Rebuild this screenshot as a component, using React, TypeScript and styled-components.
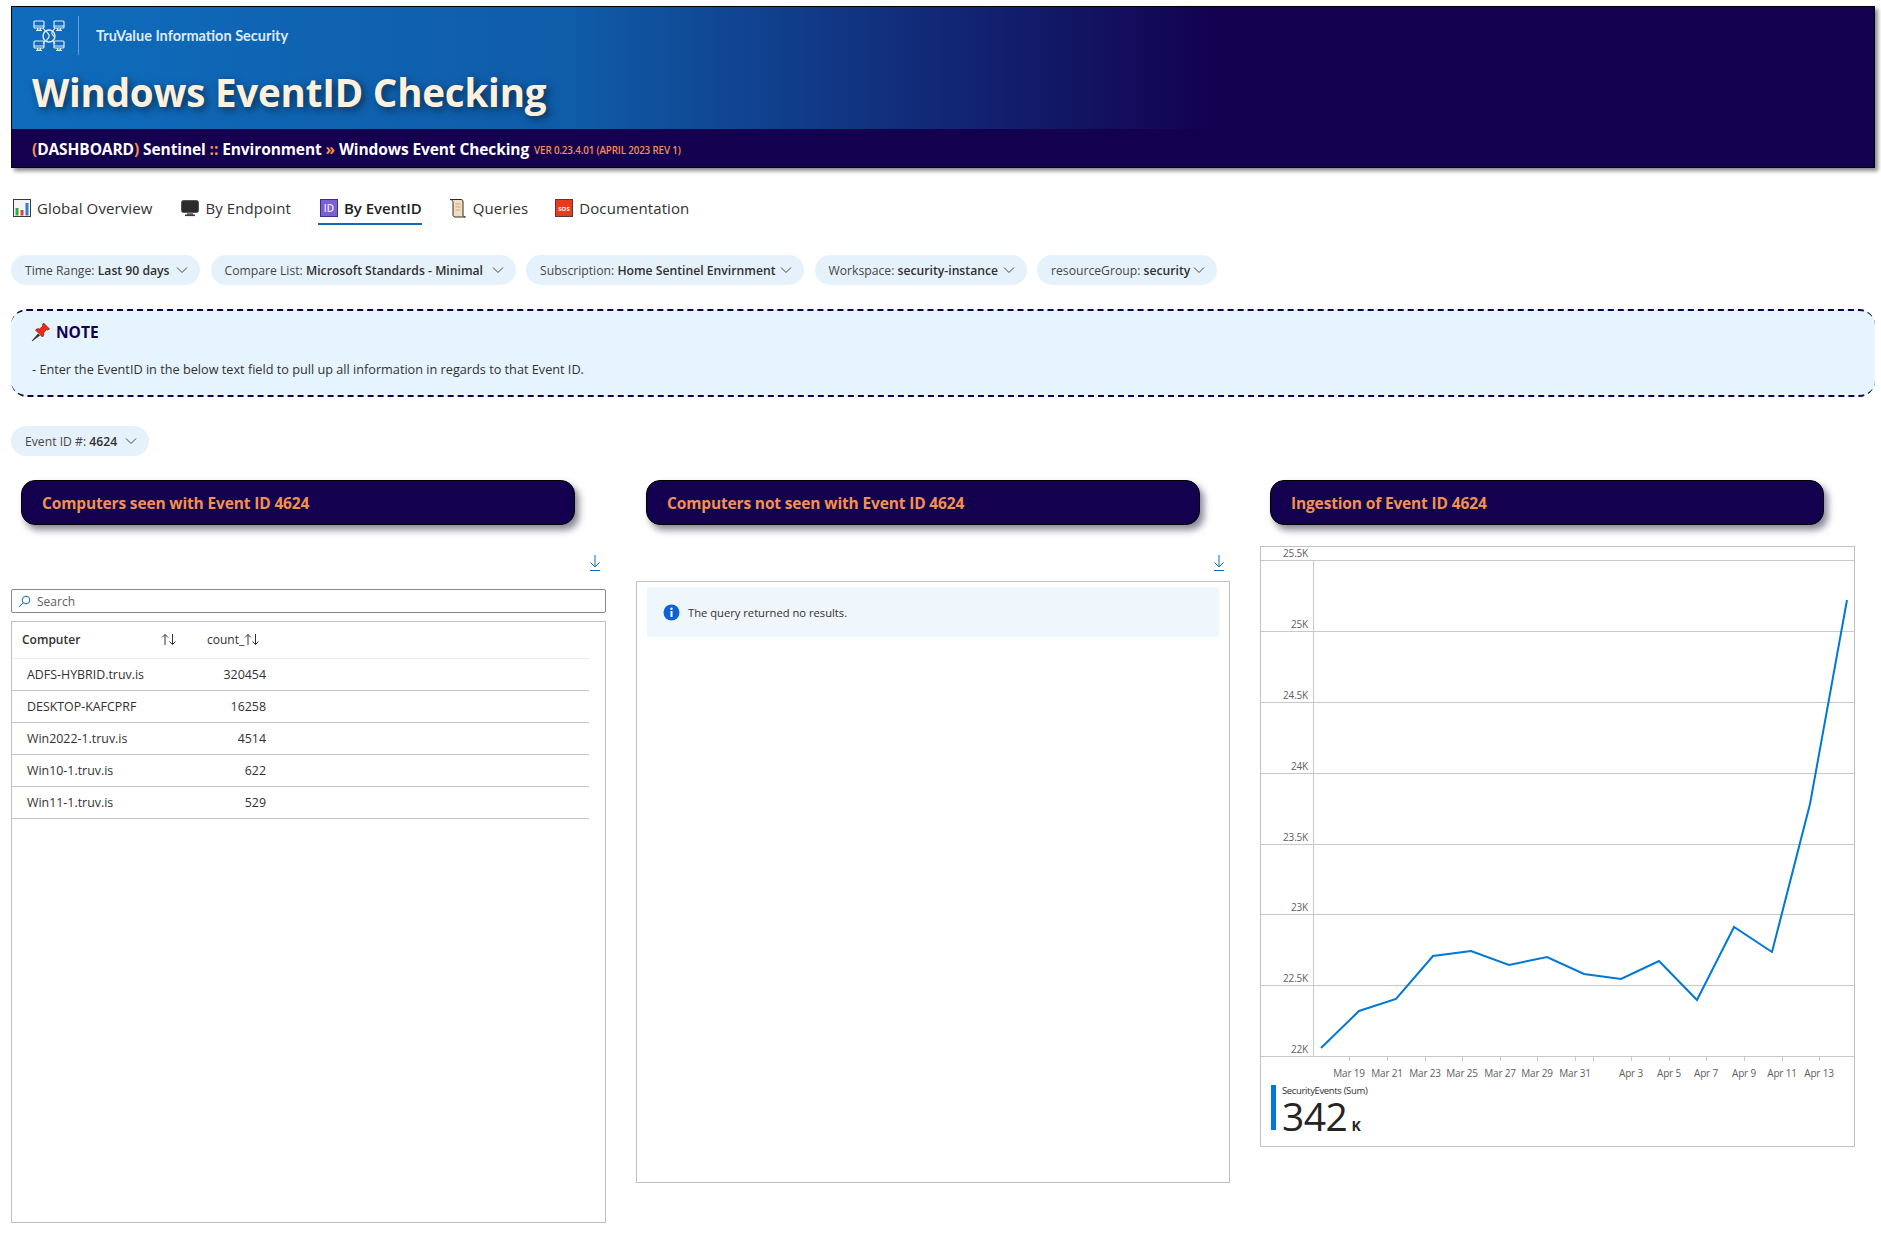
import React from 'react'
import styled, { createGlobalStyle } from 'styled-components'

const GlobalStyle = createGlobalStyle`
  html, body {
    margin: 0;
    padding: 0;
    background: #fff;
    font-family: 'Open Sans', 'Noto Sans', sans-serif;
    color: #323130;
  }
  * { box-sizing: border-box; }
`

const Page = styled.div`
  width: 1881px;
  height: 1233px;
  padding: 6px 6px 0 11px;
  overflow: hidden;
`

/* header */
const Banner = styled.header`
  height: 162px;
  border: 1px solid #000;
  background: #13004f;
  box-shadow: 3px 3px 4px #8a8a8a;
`
const BannerTop = styled.div`
  height: 122px;
  padding: 9px 0 0 20px;
  background: linear-gradient(90deg, #0f6cbd 0%, #0f5ca8 30%, #13004f 65%);
`
const Brand = styled.div`
  display: flex;
  align-items: center;
  height: 39px;
`
const BrandDivider = styled.div`
  width: 1px;
  height: 39px;
  margin: 0 17px 0 12px;
  background: rgba(255, 255, 255, 0.35);
`
const BrandName = styled.span`
  font-family: Lato, sans-serif;
  font-size: 14.5px;
  font-weight: 700;
  color: #dfe9f3;
`
const Title = styled.h1`
  margin: 12px 0 0;
  font-size: 38.5px;
  line-height: 50px;
  font-weight: 700;
  letter-spacing: -0.2px;
  color: #fdf1de;
  text-shadow: 3px 3px 8px rgba(0, 0, 0, 0.55);
`
const Crumb = styled.div`
  display: flex;
  align-items: center;
  height: 39px;
  padding-left: 20px;
  color: #fff;
  white-space: pre;
`
const CrumbText = styled.span`
  font-size: 15.5px;
  font-weight: 700;
  letter-spacing: -0.1px;
`
const Accent = styled.span`
  color: #f4914d;
`
const Version = styled.span`
  margin: 3px 0 0 5px;
  font-size: 9.8px;
  font-weight: 600;
  letter-spacing: -0.15px;
  color: #f4914d;
`

/* tabs */
const Tabs = styled.nav`
  display: flex;
  align-items: flex-start;
  margin-top: 24px;
  padding-left: 2px;
  height: 33px;
`
const Tab = styled.div<{ $active?: boolean; $gap: number }>`
  display: flex;
  align-items: center;
  gap: 6px;
  height: 33px;
  margin-right: ${p => p.$gap}px;
  padding: 0 0 0 ${p => (p.$active ? 2 : 0)}px;
  font-size: 15px;
  letter-spacing: ${p => (p.$active ? 0 : 0.1)}px;
  font-weight: ${p => (p.$active ? 600 : 400)};
  color: ${p => (p.$active ? '#201f1e' : '#323130')};
  border-bottom: 2px solid ${p => (p.$active ? '#0f6cbd' : 'transparent')};
`

/* parameter pills */
const PillRow = styled.div<{ $top: number }>`
  display: flex;
  gap: 10.5px;
  margin-top: ${p => p.$top}px;
`
const Pill = styled.div<{ $width: number }>`
  display: flex;
  align-items: center;
  justify-content: space-between;
  width: ${p => p.$width}px;
  height: 30px;
  padding: 0 12px 0 14px;
  border-radius: 15px;
  background: #e6f2fb;
  font-size: 12.2px;
  color: #484644;
  white-space: pre;
`
const PillValue = styled.span`
  color: #323130;
  font-weight: 600;
`

/* note box */
const Note = styled.section`
  height: 88px;
  margin-top: 24px;
  padding: 10px 0 0 21px;
  border-style: dashed;
  border-color: #13004f;
  border-width: 2px 0;
  border-radius: 16px;
  background: #e6f4ff;
`
const NoteHead = styled.div`
  display: flex;
  align-items: center;
  gap: 5px;
  height: 22px;
  margin-left: -1px;
  font-size: 15.5px;
  font-weight: 700;
  color: #13004f;
`
const NoteText = styled.p`
  margin: 18px 0 0;
  font-size: 12.7px;
  line-height: 16px;
  color: #323130;
`

/* columns */
const Columns = styled.div`
  display: grid;
  grid-template-columns: 595px 594px 595px;
  column-gap: 30px;
  margin-top: 24px;
`
const Column = styled.div`
  display: flex;
  flex-direction: column;
`
const SectionTitle = styled.h2`
  display: flex;
  align-items: center;
  width: 554px;
  height: 45px;
  margin: 0 0 0 10px;
  padding-left: 20px;
  border: 1px solid #000;
  border-radius: 14px;
  background: #13004f;
  box-shadow: 4px 5px 7px rgba(60, 60, 80, 0.6);
  font-size: 15.5px;
  font-weight: 700;
  letter-spacing: -0.15px;
  color: #f4914d;
`
const ActionRow = styled.div`
  display: flex;
  justify-content: flex-end;
  height: 16px;
  margin-top: 30px;
  padding-right: 5px;
`
const SearchBox = styled.div`
  display: flex;
  align-items: center;
  gap: 6px;
  height: 24px;
  margin-top: 18px;
  padding-left: 6px;
  border: 1px solid #8a8886;
  border-radius: 2px;
  font-size: 12px;
  color: #605e5c;
`
const TablePanel = styled.div`
  height: 602px;
  margin-top: 8px;
  border: 1px solid #c0c0c0;
`
const TableEl = styled.table`
  width: 577px;
  border-collapse: collapse;
  table-layout: fixed;
  font-size: 12.4px;
  color: #323130;
`
const HeadCell = styled.th`
  height: 36px;
  padding: 0 0 0 10px;
  border-bottom: 1px solid #edebe9;
  font-weight: 600;
  font-size: 12px;
  text-align: left;
`
const HeadInner = styled.div`
  display: flex;
  align-items: center;
  justify-content: space-between;
  padding-right: 12px;
`
const CountHead = styled(HeadInner)`
  justify-content: flex-start;
  margin-left: 8px;
  padding-right: 0;
  font-weight: 400;
`
const Cell = styled.td<{ $right?: boolean }>`
  height: 32px;
  padding: 0;
  padding-left: ${p => (p.$right ? 0 : 15)}px;
  border-bottom: 1px solid #c8c6c4;
  text-align: ${p => (p.$right ? 'right' : 'left')};
`
const EmptyPanel = styled.div`
  height: 602px;
  margin-top: 10px;
  padding: 5px 10px;
  border: 1px solid #c0c0c0;
`
const EmptyMessage = styled.div`
  display: flex;
  align-items: center;
  gap: 8px;
  height: 50px;
  padding-left: 16px;
  border-radius: 2px;
  background: #eff6fc;
  font-size: 11.2px;
  color: #323130;
`
const ChartPanel = styled.div`
  height: 601px;
  margin-top: 21px;
  border: 1px solid #c0c0c0;
`
const ChartSvg = styled.svg`
  display: block;
`
const AxisText = styled.text`
  font-size: 10px;
  letter-spacing: -0.2px;
  fill: #605e5c;
`
const Legend = styled.div`
  display: flex;
  height: 45px;
  margin: 4px 0 0 10px;
  padding-left: 6px;
  border-left: 5px solid #0078d4;
  flex-direction: column;
`
const LegendName = styled.div`
  font-size: 9.5px;
  line-height: 12px;
  letter-spacing: -0.35px;
  color: #323130;
`
const LegendValue = styled.div`
  display: flex;
  align-items: baseline;
  gap: 4px;
  margin-top: 1px;
  font-size: 39px;
  font-weight: 500;
  line-height: 36px;
  letter-spacing: -0.5px;
  color: #252423;
`
const LegendUnit = styled.span`
  font-size: 14px;
  font-weight: 700;
`

const NetworkLogo = () => {
  const monitors = [
    [3, 4],
    [23, 4],
    [3, 24],
    [23, 24],
  ]
  return (
    <svg width="34" height="34" viewBox="0 0 34 34" fill="none" stroke="#e3edf6" strokeWidth="1.2">
      {monitors.map(([x, y]) => (
        <g key={`${x}-${y}`}>
          <rect x={x - 1} y={y - 2} width="10" height="7" rx="1" />
          <path d={`M${x - 1} ${y + 3}h10M${x + 2.5} ${y + 5}v2h3v-2M${x + 1} ${y + 7.5}h6`} />
        </g>
      ))}
      <circle cx="17" cy="17" r="6" strokeWidth="1.4" />
      <path d="M14 12c2 3 4 3 3 6s-3 1-2 4M20 13c-1 3 2 3 2 5" />
      <path d="M11 9l3 4M23 9l-3 4M11 25l2-3M23 25l-2-3" />
    </svg>
  )
}

const ChartIcon = () => (
  <svg width="18" height="18" viewBox="0 0 18 18">
    <rect x="0.5" y="0.5" width="17" height="17" fill="#f4f4f4" stroke="#3a3a3a" />
    <rect x="2.5" y="9" width="3" height="7.5" fill="#2fae3f" />
    <rect x="7.5" y="11" width="3" height="5.5" fill="#e8402a" />
    <rect x="12.5" y="4" width="3" height="12.5" fill="#2f7fd6" />
  </svg>
)

const MonitorIcon = () => (
  <svg width="18" height="18" viewBox="0 0 18 18">
    <rect x="0.5" y="1.5" width="17" height="12" rx="2" fill="#2b2b2b" stroke="#555" />
    <path d="M6 13.5h6v2.5H6z" fill="#777" />
    <rect x="4" y="15.5" width="10" height="1.6" fill="#3a3a3a" />
  </svg>
)

const IdIcon = () => (
  <svg width="18" height="18" viewBox="0 0 18 18">
    <rect x="0.5" y="0.5" width="17" height="17" fill="#7b5fd6" stroke="#3d2f78" />
    <text x="9" y="13" textAnchor="middle" fontSize="10" fontFamily="Open Sans" fill="#e9e4fb">
      ID
    </text>
  </svg>
)

const ScrollIcon = () => (
  <svg width="18" height="20" viewBox="0 0 18 20">
    <path
      d="M1 1.5h11c1.5 0 2 1 2 2.5v13c0 1.5 1.5 2 2.5 2H6c-1.500 0-2-1-2-2.500V4.500C4 3 3 1.500 1 1.500z"
      fill="#f3dcc0"
      stroke="#2a2a2a"
    />
    <path d="M6.500 6h5M6.500 9h5M6.500 12h5" stroke="#c9a883" />
  </svg>
)

const SosIcon = () => (
  <svg width="18" height="18" viewBox="0 0 18 18">
    <rect x="0.5" y="0.5" width="17" height="17" fill="#ea3a1c" stroke="#5a3a3a" />
    <text x="9" y="11.500" textAnchor="middle" fontSize="6" fontWeight="700" fontFamily="Open Sans" fill="#fff">
      SOS
    </text>
  </svg>
)

const PinIcon = () => (
  <svg width="20" height="20" viewBox="0 0 20 20">
    <path d="M1 19l6-7 1.500 1.500z" fill="#333" stroke="#333" strokeWidth="0.8" />
    <path
      d="M12.500 1l6 6-2 1-1-.5-3 3.500c.5 1.500 0 3-1 4l-7-7c1-1 2.500-1.500 4-1l3.500-3-.5-1z"
      fill="#ee2a16"
      stroke="#8a1a10"
      strokeWidth="0.8"
    />
  </svg>
)

const Chevron = () => (
  <svg width="12" height="12" viewBox="0 0 12 12" fill="none" stroke="#484644">
    <path d="M1 3.500l5 5 5-5" />
  </svg>
)

const DownloadIcon = () => (
  <svg width="12" height="16" viewBox="0 0 12 16" fill="none" stroke="#0f6cbd" strokeWidth="1">
    <path d="M6 0v12M1.500 7.500L6 12l4.500-4.500M1 15.500h10" />
  </svg>
)

const SearchIcon = () => (
  <svg width="13" height="13" viewBox="0 0 13 13" fill="none" stroke="#0f6cbd">
    <circle cx="8" cy="5" r="3.800" />
    <path d="M5.200 7.800L1 12" />
  </svg>
)

const SortIcon = () => (
  <svg width="16" height="13" viewBox="0 0 16 13" fill="none" stroke="#323130">
    <path d="M4 12V1.500M1 4.500l3-3 3 3M11.500 1v10.500M8.500 8.500l3 3 3-3" />
  </svg>
)

const InfoIcon = () => (
  <svg width="17" height="17" viewBox="0 0 17 17">
    <circle cx="8.500" cy="8.500" r="8" fill="#0f62d6" />
    <rect x="7.500" y="7" width="2" height="6" fill="#fff" />
    <circle cx="8.500" cy="4.800" r="1.200" fill="#fff" />
  </svg>
)

const rows = [
  ['ADFS-HYBRID.truv.is', '320454'],
  ['DESKTOP-KAFCPRF', '16258'],
  ['Win2022-1.truv.is', '4514'],
  ['Win10-1.truv.is', '622'],
  ['Win11-1.truv.is', '529'],
]

// chart coords are the page coords minus the panel's inner corner (1261, 547)
const ox = 1261
const oy = 547
const gridLines = [
  ['25.5K', 560],
  ['25K', 631],
  ['24.5K', 702],
  ['24K', 773],
  ['23.5K', 844],
  ['23K', 914],
  ['22.5K', 985],
  ['22K', 1056],
] as const
const series = [
  [1321, 1048],
  [1359, 1011],
  [1396, 999],
  [1433, 956],
  [1471, 951],
  [1509, 965],
  [1547, 957],
  [1584, 974],
  [1621, 979],
  [1659, 961],
  [1697, 1000],
  [1734, 927],
  [1772, 952],
  [1810, 804],
  [1847, 600],
]
const xLabels = [
  ['Mar 19', 1349],
  ['Mar 21', 1387],
  ['Mar 23', 1425],
  ['Mar 25', 1462],
  ['Mar 27', 1500],
  ['Mar 29', 1537],
  ['Mar 31', 1575],
  ['Apr 3', 1631],
  ['Apr 5', 1669],
  ['Apr 7', 1706],
  ['Apr 9', 1744],
  ['Apr 11', 1782],
  ['Apr 13', 1819],
] as const

const IngestionChart = () => (
  <ChartSvg width="593" height="534" viewBox="0 0 593 534">
    {gridLines.map(([label, y]) => (
      <g key={label}>
        <line x1="0" x2="593" y1={y - oy + 0.5} y2={y - oy + 0.5} stroke="#c8c8c8" />
        <AxisText x="47" y={y - oy - 3} textAnchor="end">
          {label}
        </AxisText>
      </g>
    ))}
    <line x1="52.500" x2="52.500" y1={560 - oy} y2={1056 - oy} stroke="#c8c8c8" />
    {[...xLabels.map(([, x]) => x), 1593].map(x => (
      <line key={x} x1={x - ox + 0.5} x2={x - ox + 0.5} y1={1056 - oy} y2={1061 - oy} stroke="#c8c8c8" />
    ))}
    {xLabels.map(([label, x]) => (
      <AxisText key={label} x={x - ox} y={1077 - oy} textAnchor="middle">
        {label}
      </AxisText>
    ))}
    <polyline
      points={series.map(([x, y]) => `${x - ox},${y - oy}`).join(' ')}
      fill="none"
      stroke="#0078d4"
      strokeWidth="2"
    />
  </ChartSvg>
)

const App = () => (
  <Page>
    <GlobalStyle />
    <Banner>
      <BannerTop>
        <Brand>
          <NetworkLogo />
          <BrandDivider />
          <BrandName>TruValue Information Security</BrandName>
        </Brand>
        <Title>Windows EventID Checking</Title>
      </BannerTop>
      <Crumb>
        <CrumbText>
          <Accent>(</Accent>DASHBOARD<Accent>)</Accent> Sentinel <Accent>::</Accent> Environment <Accent>»</Accent>{' '}
          Windows Event Checking
        </CrumbText>
        <Version>VER 0.23.4.01 (APRIL 2023 REV 1)</Version>
      </Crumb>
    </Banner>

    <Tabs>
      <Tab $gap={29}>
        <ChartIcon />
        Global Overview
      </Tab>
      <Tab $gap={27}>
        <MonitorIcon />
        By Endpoint
      </Tab>
      <Tab $active $gap={27}>
        <IdIcon />
        By EventID
      </Tab>
      <Tab $gap={27}>
        <ScrollIcon />
        Queries
      </Tab>
      <Tab $gap={0}>
        <SosIcon />
        Documentation
      </Tab>
    </Tabs>

    <PillRow $top={30}>
      <Pill $width={189}>
        <span>
          Time Range: <PillValue>Last 90 days</PillValue>
        </span>
        <Chevron />
      </Pill>
      <Pill $width={305}>
        <span>
          Compare List: <PillValue>Microsoft Standards - Minimal</PillValue>
        </span>
        <Chevron />
      </Pill>
      <Pill $width={278}>
        <span>
          Subscription: <PillValue>Home Sentinel Envirnment</PillValue>
        </span>
        <Chevron />
      </Pill>
      <Pill $width={212}>
        <span>
          Workspace: <PillValue>security-instance</PillValue>
        </span>
        <Chevron />
      </Pill>
      <Pill $width={180}>
        <span>
          resourceGroup: <PillValue>security</PillValue>
        </span>
        <Chevron />
      </Pill>
    </PillRow>

    <Note>
      <NoteHead>
        <PinIcon />
        NOTE
      </NoteHead>
      <NoteText>- Enter the EventID in the below text field to pull up all information in regards to that Event ID.</NoteText>
    </Note>

    <PillRow $top={29}>
      <Pill $width={138}>
        <span>
          Event ID #: <PillValue>4624</PillValue>
        </span>
        <Chevron />
      </Pill>
    </PillRow>

    <Columns>
      <Column>
        <SectionTitle>Computers seen with Event ID 4624</SectionTitle>
        <ActionRow>
          <DownloadIcon />
        </ActionRow>
        <SearchBox>
          <SearchIcon />
          Search
        </SearchBox>
        <TablePanel>
          <TableEl>
            <colgroup>
              <col width="177" />
              <col width="77" />
              <col />
            </colgroup>
            <thead>
              <tr>
                <HeadCell>
                  <HeadInner>
                    Computer
                    <SortIcon />
                  </HeadInner>
                </HeadCell>
                <HeadCell>
                  <CountHead>
                    count_
                    <SortIcon />
                  </CountHead>
                </HeadCell>
                <HeadCell />
              </tr>
            </thead>
            <tbody>
              {rows.map(([name, count]) => (
                <tr key={name}>
                  <Cell>{name}</Cell>
                  <Cell $right>{count}</Cell>
                  <Cell />
                </tr>
              ))}
            </tbody>
          </TableEl>
        </TablePanel>
      </Column>

      <Column>
        <SectionTitle>Computers not seen with Event ID 4624</SectionTitle>
        <ActionRow>
          <DownloadIcon />
        </ActionRow>
        <EmptyPanel>
          <EmptyMessage>
            <InfoIcon />
            The query returned no results.
          </EmptyMessage>
        </EmptyPanel>
      </Column>

      <Column>
        <SectionTitle>Ingestion of Event ID 4624</SectionTitle>
        <ChartPanel>
          <IngestionChart />
          <Legend>
            <LegendName>SecurityEvents (Sum)</LegendName>
            <LegendValue>
              342
              <LegendUnit>K</LegendUnit>
            </LegendValue>
          </Legend>
        </ChartPanel>
      </Column>
    </Columns>
  </Page>
)

export default App
